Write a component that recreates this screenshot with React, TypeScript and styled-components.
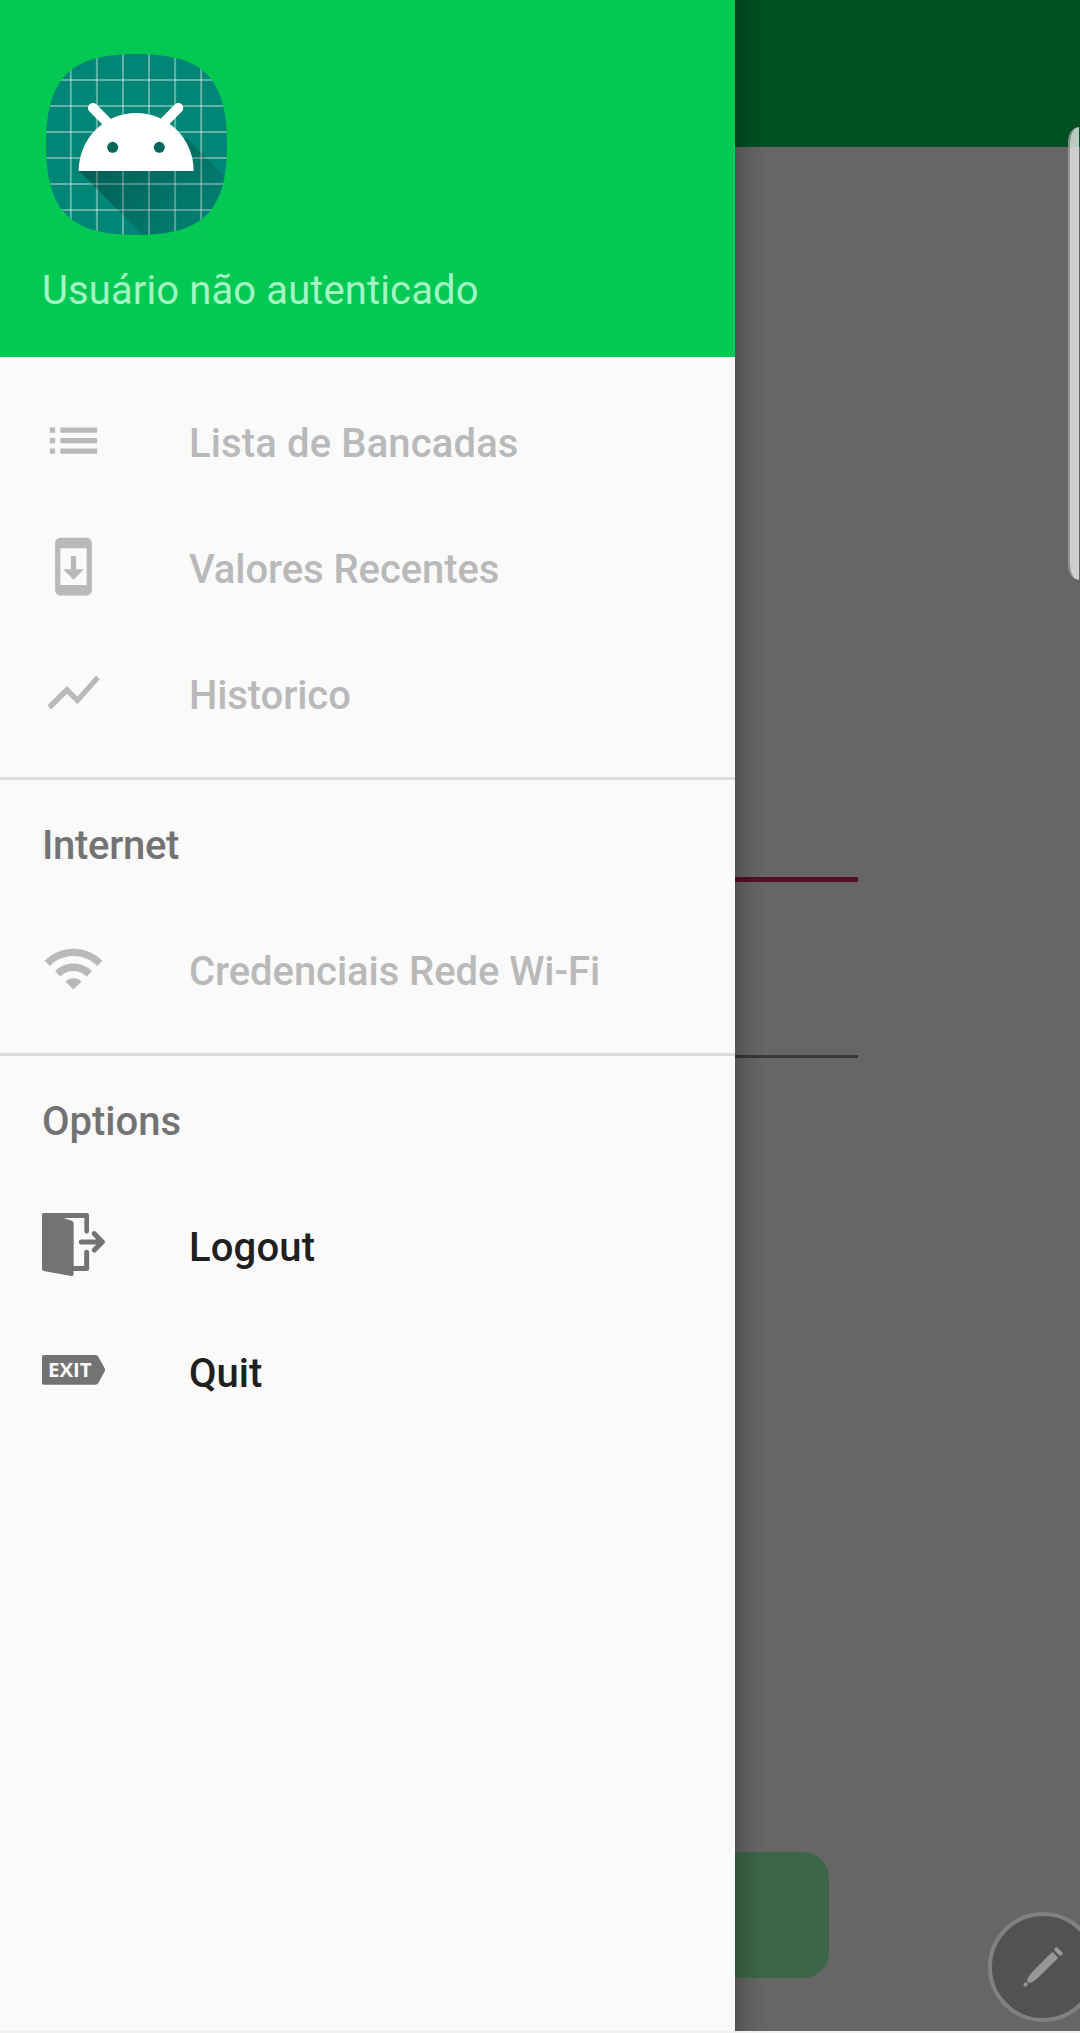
import React from "react";
import styled, { createGlobalStyle } from "styled-components";

const GlobalStyle = createGlobalStyle`
  *, *::before, *::after { box-sizing: border-box; }
  body {
    margin: 0;
    font-family: Roboto, "Noto Sans", sans-serif;
    background: #f1f1f1;
  }
`;

const Screen = styled.div`
  position: relative;
  width: 1080px;
  height: 2033px;
  padding-bottom: 2px;
  overflow: hidden;
`;

const Page = styled.main`
  display: flex;
  flex-direction: column;
  height: 2031px;
  background: #666666;
`;

const AppBar = styled.header`
  flex: none;
  height: 147px;
  background: #005021;
`;

const Form = styled.section`
  flex: 1;
  display: flex;
  flex-direction: column;
  padding: 730px 222px 53px;
`;

const Field = styled.div<{ $active?: boolean }>`
  height: ${(p) => (p.$active ? 5 : 3)}px;
  margin-bottom: ${(p) => (p.$active ? 173 : 0)}px;
  background: ${(p) => (p.$active ? "#541029" : "#383838")};
`;

const SubmitButton = styled.div`
  height: 126px;
  margin: auto 29px 0;
  border-radius: 26px;
  background: #3d6648;
`;

const Drawer = styled.aside`
  position: absolute;
  top: 0;
  left: 0;
  width: 735px;
  height: 2031px;
  display: flex;
  flex-direction: column;
  background: #fafafa;
`;

const DrawerShadow = styled.div`
  position: absolute;
  top: 0;
  left: 735px;
  width: 32px;
  height: 2031px;
  background: linear-gradient(to right, rgba(0, 0, 0, 0.2), rgba(0, 0, 0, 0.07) 45%, rgba(0, 0, 0, 0));
`;

const DrawerHeader = styled.div`
  flex: none;
  display: flex;
  flex-direction: column;
  align-items: flex-start;
  height: 357px;
  padding: 54px 42px 0;
  background: #02c953;
`;

const LogoWrap = styled.div`
  height: 181px;
  padding-left: 4px;
  svg { display: block; }
`;

const UserName = styled.div`
  margin-top: 32px;
  font-size: 40px;
  line-height: 48px;
  letter-spacing: 0.11px;
  white-space: nowrap;
  color: #a3f5c3;
`;

const Menu = styled.nav`
  display: flex;
  flex-direction: column;
  padding-top: 21px;
`;

const Group = styled.div<{ $divided?: boolean }>`
  display: flex;
  flex-direction: column;
  ${(p) => p.$divided && "margin-top: 21px; border-top: 3px solid #dcdcdc;"}
`;

const Row = styled.div<{ $disabled?: boolean }>`
  display: flex;
  align-items: center;
  gap: 84px;
  height: 126px;
  padding: 0 42px;
  color: ${(p) => (p.$disabled ? "#b9b9b9" : "#737373")};
  svg { display: block; flex: none; margin-bottom: 1px; }
`;

const RowLabel = styled.span<{ $disabled?: boolean; $tracking?: number }>`
  padding-top: 6px;
  font-size: 40px;
  font-weight: 500;
  line-height: 48px;
  letter-spacing: ${(p) => p.$tracking ?? 0}px;
  white-space: nowrap;
  color: ${(p) => (p.$disabled ? "#b9b9b9" : "#202020")};
`;

const GroupTitle = styled.div<{ $tracking?: number }>`
  display: flex;
  align-items: center;
  height: 126px;
  padding: 6px 42px 0;
  font-size: 40px;
  font-weight: 500;
  line-height: 48px;
  letter-spacing: ${(p) => p.$tracking ?? 0}px;
  color: #737373;
`;

const EdgeHandle = styled.div`
  position: absolute;
  top: 127px;
  right: 1px;
  width: 11px;
  height: 453px;
  border-left: 2px solid rgba(160, 160, 160, 0.8);
  border-radius: 12px 0 0 12px / 16px 0 0 16px;
  background: rgba(234, 234, 234, 0.8);
  background-clip: padding-box;
`;

const PenButton = styled.div`
  position: absolute;
  left: 988px;
  top: 1912px;
  width: 110px;
  height: 110px;
  border: 4px solid #818181;
  border-radius: 50%;
  background: #525252;
  display: flex;
  align-items: center;
  justify-content: center;
  svg { overflow: visible; }
`;

const Glyph = ({ d }: { d: string }) => (
  <svg width="63" height="63" viewBox="0 0 24 24" fill="currentColor">
    <path d={d} />
  </svg>
);

const LIST = "M3 13h2v-2H3v2zm0 4h2v-2H3v2zm0-8h2V7H3v2zm4 4h14v-2H7v2zm0 4h14v-2H7v2zM7 7v2h14V7H7z";
const UPDATE =
  "M17 1.01L7 1c-1.1 0-2 .9-2 2v18c0 1.1.9 2 2 2h10c1.1 0 2-.9 2-2V3c0-1.1-.9-1.99-2-1.99zM17 19H7V5h10v14zm-1-6h-3V8h-2v5H8l4 4 4-4z";
const CHART = "M3.5 18.49l6-6.01 4 4L22 6.92l-1.41-1.41-7.09 7.97-4-4L2 16.99z";
const WIFI =
  "M1 9l2 2c4.97-4.97 13.03-4.97 18 0l2-2C16.93 2.93 7.08 2.93 1 9zm8 8l3 3 3-3c-1.65-1.66-4.34-1.66-6 0zm-4-4l2 2c2.76-2.76 7.24-2.76 10 0l2-2C15.14 9.14 8.87 9.14 5 13z";

const LogoutIcon = () => (
  <svg width="63" height="63" viewBox="0 0 189 189">
    <path d="M0 5Q0 0 5 0H135Q141 0 141 6V55A7 7 0 0 1 127 55V15H64L89 23Q95 25 95 31V183Q95 190 88 189L5 174Q0 173 0 168Z" fill="currentColor" />
    <path d="M93 166.500H134V118" fill="none" stroke="currentColor" strokeWidth="15" strokeLinecap="round" strokeLinejoin="round" />
    <path d="M118 87H176M157 62L181 87L157 111" fill="none" stroke="currentColor" strokeWidth="15" strokeLinecap="round" strokeLinejoin="round" />
  </svg>
);

const ExitIcon = () => (
  <svg width="63" height="63" viewBox="0 0 189 189">
    <path d="M5 48H160Q166 48 169 53L188 88Q190 93 188 97L169 132Q166 137 160 137H5Q0 137 0 132V53Q0 48 5 48Z" fill="currentColor" />
    <text x="18" y="114" textLength="131" lengthAdjust="spacingAndGlyphs" fontFamily="Open Sans, sans-serif" fontWeight="700" fontSize="61" fill="#fafafa">
      EXIT
    </text>
  </svg>
);

const GRID = [0, 1, 2, 3, 4, 5];

const Logo = () => (
  <svg width="181" height="181" viewBox="0 0 543 543">
    <defs>
      <clipPath id="tile">
        <path d="M0 271.500C0 72 72 0 271.500 0S543 72 543 271.500S471 543 271.500 543S0 471 0 271.500Z" />
      </clipPath>
      <linearGradient id="cast" gradientUnits="userSpaceOnUse" x1="190" y1="260" x2="470" y2="540">
        <stop offset="0" stopColor="#000" stopOpacity="0.3" />
        <stop offset="1" stopColor="#000" stopOpacity="0.03" />
      </linearGradient>
    </defs>
    <g clipPath="url(#tile)">
      <rect width="543" height="543" fill="#018577" />
      {GRID.map((i) => (
        <g key={i} fill="#fff" fillOpacity="0.38">
          <rect x={71.500 + i * 78.2} y="0" width="6" height="543" />
          <rect x="0" y={75 + i * 78} width="543" height="6" />
        </g>
      ))}
      <path d="M98 350L298 550H550V381L420 251Z" fill="url(#cast)" />
    </g>
    <path d="M98 351C98 255 175 177 270.500 177S443 255 443 351Z" fill="#fff" />
    <path d="M141 162L188 209M397 162L350 209" stroke="#fff" strokeWidth="30" strokeLinecap="round" />
    <circle cx="200" cy="280" r="16.500" fill="#01695c" />
    <circle cx="340" cy="280" r="16.500" fill="#01695c" />
  </svg>
);

const PenIcon = () => (
  <svg width="40" height="40" viewBox="0 0 120 120" fill="#979797">
    <g transform="translate(60 60) rotate(-45)">
      <path d="M-64 0C-66 -6 -56 -9 -44 -11Q-36 -12.500 -28 -12.500H48Q52 -12.500 52 -9V9Q52 12.500 48 12.500H-28Q-36 12.500 -44 11C-56 9 -66 6 -64 0Z" />
      <rect x="59" y="-15" width="13" height="30" rx="6.500" />
      <ellipse cx="-74" cy="0" rx="7" ry="5.500" />
    </g>
  </svg>
);

export default function App() {
  return (
    <Screen>
      <GlobalStyle />
      <Page>
        <AppBar />
        <Form>
          <Field $active />
          <Field />
          <SubmitButton />
        </Form>
      </Page>
      <DrawerShadow />
      <Drawer>
        <DrawerHeader>
          <LogoWrap>
            <Logo />
          </LogoWrap>
          <UserName>Usuário não autenticado</UserName>
        </DrawerHeader>
        <Menu>
          <Group>
            <Row $disabled>
              <Glyph d={LIST} />
              <RowLabel $disabled $tracking={0.13}>Lista de Bancadas</RowLabel>
            </Row>
            <Row $disabled>
              <Glyph d={UPDATE} />
              <RowLabel $disabled $tracking={-0.08}>Valores Recentes</RowLabel>
            </Row>
            <Row $disabled>
              <Glyph d={CHART} />
              <RowLabel $disabled $tracking={-0.1}>Historico</RowLabel>
            </Row>
          </Group>
          <Group $divided>
            <GroupTitle $tracking={-0.3}>Internet</GroupTitle>
            <Row $disabled>
              <Glyph d={WIFI} />
              <RowLabel $disabled $tracking={-0.07}>Credenciais Rede Wi-Fi</RowLabel>
            </Row>
          </Group>
          <Group $divided>
            <GroupTitle>Options</GroupTitle>
            <Row>
              <LogoutIcon />
              <RowLabel $tracking={0.15}>Logout</RowLabel>
            </Row>
            <Row>
              <ExitIcon />
              <RowLabel>Quit</RowLabel>
            </Row>
          </Group>
        </Menu>
      </Drawer>
      <EdgeHandle />
      <PenButton>
        <PenIcon />
      </PenButton>
    </Screen>
  );
}
